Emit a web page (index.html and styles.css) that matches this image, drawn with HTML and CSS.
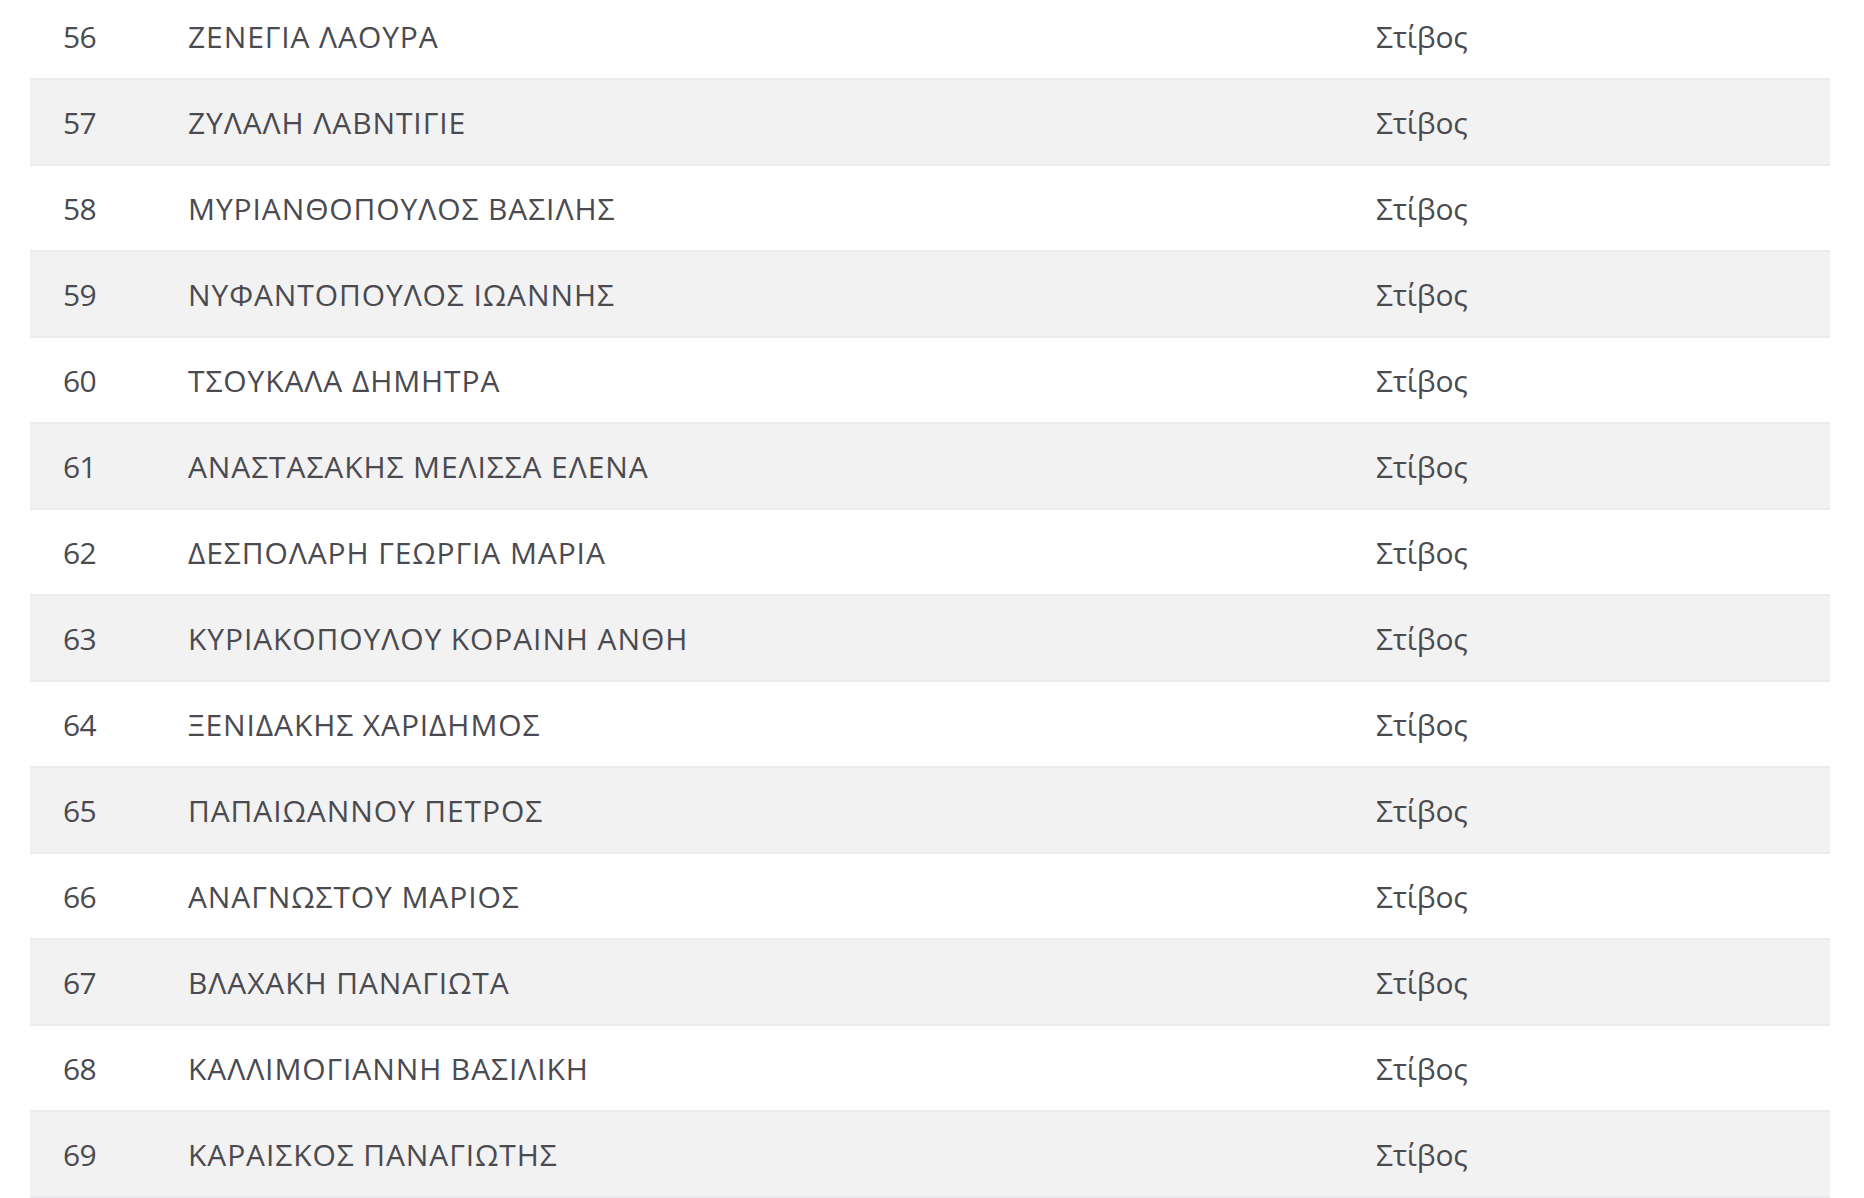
FILE: index.html
```html
<!DOCTYPE html>
<html lang="el">
<head>
<meta charset="utf-8">
<title>Λίστα αθλητών</title>
<link rel="stylesheet" href="styles.css">
</head>
<body>
<div class="list">
  <div class="row"><span class="num">56</span><span class="name">ΖΕΝΕΓΙΑ ΛΑΟΥΡΑ</span><span class="sport">Στίβος</span></div>
  <div class="row alt"><span class="num">57</span><span class="name">ΖΥΛΑΛΗ ΛΑΒΝΤΙΓΙΕ</span><span class="sport">Στίβος</span></div>
  <div class="row"><span class="num">58</span><span class="name">ΜΥΡΙΑΝΘΟΠΟΥΛΟΣ ΒΑΣΙΛΗΣ</span><span class="sport">Στίβος</span></div>
  <div class="row alt"><span class="num">59</span><span class="name">ΝΥΦΑΝΤΟΠΟΥΛΟΣ ΙΩΑΝΝΗΣ</span><span class="sport">Στίβος</span></div>
  <div class="row"><span class="num">60</span><span class="name">ΤΣΟΥΚΑΛΑ ΔΗΜΗΤΡΑ</span><span class="sport">Στίβος</span></div>
  <div class="row alt"><span class="num">61</span><span class="name">ΑΝΑΣΤΑΣΑΚΗΣ ΜΕΛΙΣΣΑ ΕΛΕΝΑ</span><span class="sport">Στίβος</span></div>
  <div class="row"><span class="num">62</span><span class="name">ΔΕΣΠΟΛΑΡΗ ΓΕΩΡΓΙΑ ΜΑΡΙΑ</span><span class="sport">Στίβος</span></div>
  <div class="row alt"><span class="num">63</span><span class="name">ΚΥΡΙΑΚΟΠΟΥΛΟΥ ΚΟΡΑΙΝΗ ΑΝΘΗ</span><span class="sport">Στίβος</span></div>
  <div class="row"><span class="num">64</span><span class="name">ΞΕΝΙΔΑΚΗΣ ΧΑΡΙΔΗΜΟΣ</span><span class="sport">Στίβος</span></div>
  <div class="row alt"><span class="num">65</span><span class="name">ΠΑΠΑΙΩΑΝΝΟΥ ΠΕΤΡΟΣ</span><span class="sport">Στίβος</span></div>
  <div class="row"><span class="num">66</span><span class="name">ΑΝΑΓΝΩΣΤΟΥ ΜΑΡΙΟΣ</span><span class="sport">Στίβος</span></div>
  <div class="row alt"><span class="num">67</span><span class="name">ΒΛΑΧΑΚΗ ΠΑΝΑΓΙΩΤΑ</span><span class="sport">Στίβος</span></div>
  <div class="row"><span class="num">68</span><span class="name">ΚΑΛΛΙΜΟΓΙΑΝΝΗ ΒΑΣΙΛΙΚΗ</span><span class="sport">Στίβος</span></div>
  <div class="row alt"><span class="num">69</span><span class="name">ΚΑΡΑΙΣΚΟΣ ΠΑΝΑΓΙΩΤΗΣ</span><span class="sport">Στίβος</span></div>
</div>
</body>
</html>
```
FILE: styles.css
```css
html, body {
  margin: 0;
  padding: 0;
  background: #ffffff;
  overflow: hidden;
}
body {
  font-family: "Open Sans", "Noto Sans", sans-serif;
  color: #4a4a50;
}
.list {
  margin: -8px 34px 0 30px;
  display: flex;
  flex-direction: column;
}
.row {
  display: grid;
  grid-template-columns: 125px 1188px 1fr;
  align-items: center;
  height: 84px;
  padding-left: 33px;
  border-top: 2px solid #ebebef;
  border-bottom: 0;
  font-size: 30px;
  letter-spacing: -0.6px;
}
.row:last-child {
  border-bottom: 2px solid #ebebef;
}
.row.alt {
  background: #f2f2f2;
}
.num, .name, .sport {
  white-space: nowrap;
}
.name {
  letter-spacing: 0.9px;
}
.sport {
  letter-spacing: -0.2px;
}
```
